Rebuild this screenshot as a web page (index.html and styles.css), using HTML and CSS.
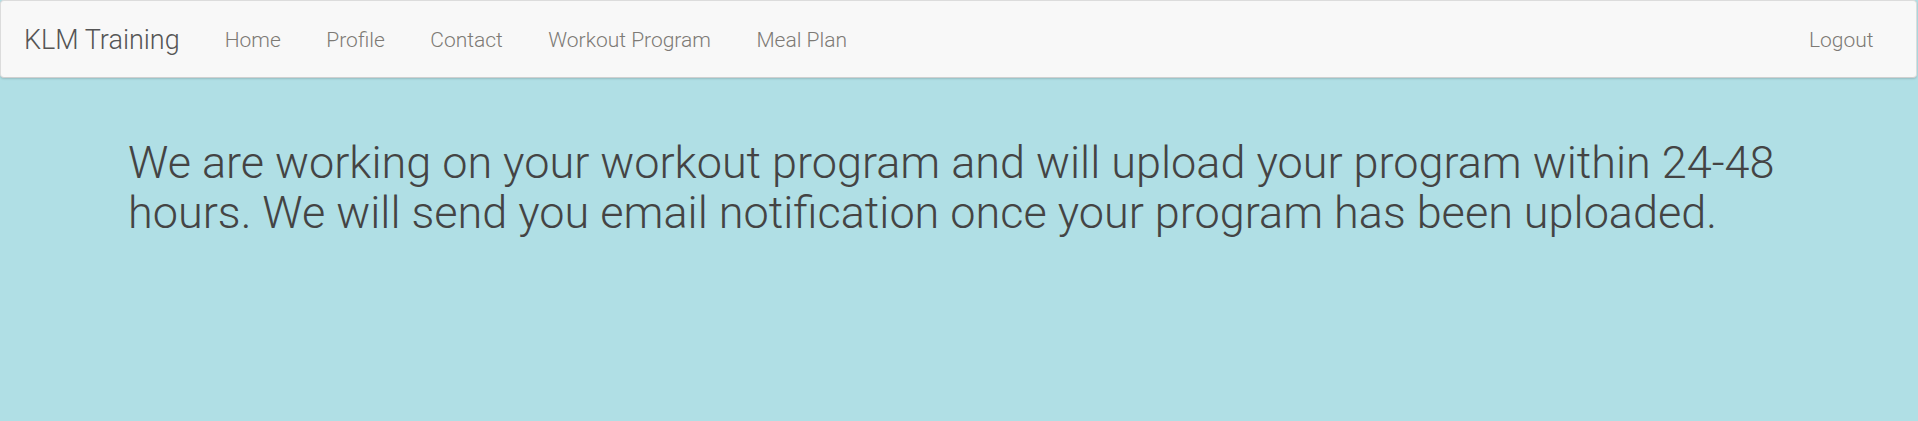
FILE: index.html
```html
<!DOCTYPE html>
<html lang="en">
<head>
<meta charset="utf-8">
<title>KLM Training</title>
<link rel="stylesheet" href="styles.css">
</head>
<body>
<nav class="navbar">
  <a class="brand" href="#">KLM Training</a>
  <ul class="nav">
    <li><a href="#">Home</a></li>
    <li><a href="#">Profile</a></li>
    <li><a href="#">Contact</a></li>
    <li><a href="#">Workout Program</a></li>
    <li><a href="#">Meal Plan</a></li>
  </ul>
  <ul class="nav nav-right">
    <li><a href="#">Logout</a></li>
  </ul>
</nav>
<main class="content">
  <h1 class="message">We are working on your workout program and will upload your program within 24-48 hours. We will send you email notification once your program has been uploaded.</h1>
</main>
</body>
</html>
```
FILE: styles.css
```css
html, body {
  margin: 0;
  padding: 0;
}
body {
  background: #b0dfe5;
  font-family: Roboto, "Liberation Sans", sans-serif;
  font-weight: 300;
  color: #444;
  height: 421px;
}
.navbar {
  display: flex;
  align-items: center;
  height: 76px;
  width: 1915px;
  background: #f8f8f8;
  border: 1px solid #dcdcdc;
  border-bottom-color: #d0d0d0;
  border-radius: 4px;
  box-shadow: 0 1px 2px rgba(0,0,0,0.15);
  box-sizing: content-box;
}
.brand {
  font-size: 27px;
  color: #555;
  text-decoration: none;
  padding: 2px 22px 0 23px;
  line-height: 74px;
}
.nav {
  display: flex;
  list-style: none;
  margin: 0;
  padding: 0;
}
.nav a {
  display: block;
  padding: 2px 22.5px 0 23px;
  font-size: 21px;
  line-height: 74px;
  color: #7d7a75;
  text-decoration: none;
}
.nav-right {
  margin-left: auto;
  margin-right: 20px;
}
.content {
  padding: 60px 128px 0 128px;
}
.message {
  margin: 0;
  font-size: 45px;
  font-weight: 300;
  line-height: 49.5px;
  color: #444;
}
```
